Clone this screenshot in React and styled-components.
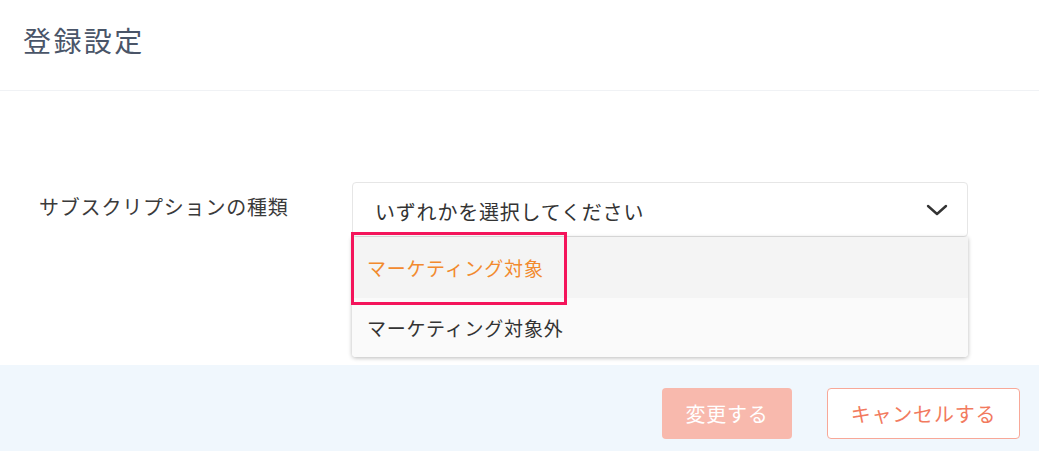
import React from 'react'
import styled, { createGlobalStyle } from 'styled-components'

const GlobalStyle = createGlobalStyle`
  html, body {
    margin: 0;
    padding: 0;
    background: #fff;
  }
  body {
    font-family: "Noto Sans CJK JP", "Noto Sans", sans-serif;
  }
`

const options = [
  { label: 'マーケティング対象', active: true },
  { label: 'マーケティング対象外', active: false },
]

function App() {
  return (
    <>
      <GlobalStyle />
      <Page>
        <Header>
          <Title>登録設定</Title>
        </Header>
        <Body>
          <FormRow>
            <Label>サブスクリプションの種類</Label>
            <SelectWrap>
              <SelectBox>
                <Placeholder>いずれかを選択してください</Placeholder>
                <svg width="22" height="12" viewBox="0 0 22 12" fill="none">
                  <path d="M2 2l9 8 9-8" stroke="#333" strokeWidth="2.4" strokeLinecap="round" strokeLinejoin="round" />
                </svg>
              </SelectBox>
              <Menu>
                {options.map((o) => (
                  <Option key={o.label} $active={o.active}>{o.label}</Option>
                ))}
              </Menu>
              <Highlight />
            </SelectWrap>
          </FormRow>
        </Body>
        <Footer>
          <PrimaryButton disabled>変更する</PrimaryButton>
          <GhostButton>キャンセルする</GhostButton>
        </Footer>
      </Page>
    </>
  )
}

export default App

const Page = styled.div`
  width: 1039px;
  height: 451px;
  display: flex;
  flex-direction: column;
  overflow: hidden;
`

const Header = styled.header`
  height: 91px;
  border-bottom: 1px solid #f0f2f5;
  display: flex;
  align-items: center;
  padding-left: 23px;
  box-sizing: border-box;
`

const Title = styled.h1`
  margin: 0;
  font-size: 28px;
  font-weight: 400;
  letter-spacing: 2.4px;
  color: #4a5568;
  margin-top: -10px;
`

const Body = styled.main`
  height: 274px;
  padding-top: 91px;
  box-sizing: border-box;
`

const FormRow = styled.div`
  display: flex;
  align-items: flex-start;
`

const Label = styled.div`
  flex: 0 0 352px;
  padding-left: 39px;
  padding-top: 10px;
  box-sizing: border-box;
  font-size: 20px;
  letter-spacing: 0.8px;
  color: #3a3a3a;
`

const SelectWrap = styled.div`
  position: relative;
  width: 616px;
`

const SelectBox = styled.div`
  height: 55px;
  border: 1px solid #e6e6e6;
  border-radius: 4px;
  box-sizing: border-box;
  display: flex;
  align-items: center;
  justify-content: space-between;
  padding: 0 19px 0 22px;
  background: #fff;
`

const Placeholder = styled.span`
  font-size: 20px;
  letter-spacing: 0.8px;
  color: #333;
  margin-top: 3px;
`

const Menu = styled.div`
  position: absolute;
  top: 55px;
  left: 0;
  right: 0;
  border-radius: 0 0 4px 4px;
  overflow: hidden;
  box-shadow: 0 1px 4px rgba(0, 0, 0, 0.28);
  z-index: 2;
`

const Option = styled.div`
  height: ${(p) => (p.$active ? '61px' : '59px')};
  display: flex;
  align-items: center;
  padding-left: 15px;
  font-size: 19px;
  letter-spacing: 0.8px;
  background: ${(p) => (p.$active ? '#f4f4f4' : '#fafafa')};
  color: ${(p) => (p.$active ? '#f28a2e' : '#333')};
`

const Highlight = styled.div`
  position: absolute;
  top: 50px;
  left: -1px;
  width: 216px;
  height: 73px;
  border: 3px solid #f4145b;
  box-sizing: border-box;
  z-index: 3;
`

const Footer = styled.footer`
  flex: 1;
  background: #f0f7fd;
  display: flex;
  justify-content: flex-end;
  align-items: flex-start;
  gap: 35px;
  padding: 23px 19px 0 0;
`

const BaseButton = styled.button`
  height: 51px;
  border-radius: 4px;
  font-family: "Noto Sans CJK JP", "Noto Sans", sans-serif;
  font-size: 20px;
  letter-spacing: 0.8px;
  box-sizing: border-box;
  cursor: pointer;
`

const PrimaryButton = styled(BaseButton)`
  width: 130px;
  border: none;
  background: #f8b9ad;
  color: #fff;
`

const GhostButton = styled(BaseButton)`
  width: 193px;
  border: 1px solid #f8a898;
  background: #fff;
  color: #f27a5e;
`
